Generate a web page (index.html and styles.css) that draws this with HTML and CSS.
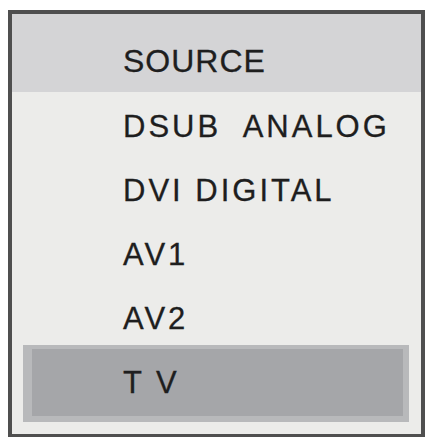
FILE: index.html
```html
<!DOCTYPE html>
<html>
<head>
<meta charset="utf-8">
<link rel="stylesheet" href="styles.css">
</head>
<body>
<div class="menu">
  <div class="menu-title">SOURCE</div>
  <ul class="menu-list">
    <li class="menu-item">DSUB  ANALOG</li>
    <li class="menu-item">DVI DIGITAL</li>
    <li class="menu-item">AV1</li>
    <li class="menu-item">AV2</li>
    <li class="menu-item selected">T V</li>
  </ul>
</div>
</body>
</html>
```
FILE: styles.css
```css
html, body {
  margin: 0;
  padding: 0;
  background: #ffffff;
}
body {
  padding: 10px 0 0 8px;
  font-family: "Liberation Sans", Arial, sans-serif;
  color: #1e1e1e;
}
.menu {
  width: 409px;
  height: 420px;
  border: 4px solid #4f4f4f;
  background: #ececea;
  display: flex;
  flex-direction: column;
}
.menu-title {
  height: 78px;
  box-sizing: border-box;
  padding: 31px 0 0 111px;
  background: #d4d4d6;
  font-size: 32px;
  line-height: 32px;
  letter-spacing: 1px;
  -webkit-text-stroke: 0.3px #1e1e1e;
}
.menu-list {
  list-style: none;
  margin: 0;
  padding: 3px 0 0 0;
  display: flex;
  flex-direction: column;
}
.menu-item {
  height: 64px;
  line-height: 64px;
  padding-left: 111px;
  font-size: 31px;
  letter-spacing: 3px;
  white-space: pre;
  -webkit-text-stroke: 0.3px #1e1e1e;
}
.menu-item.selected {
  margin: -6px 12px 0 11px;
  height: 67px;
  line-height: 67px;
  padding-left: 91px;
  background: #a5a6a9;
  border-style: solid;
  border-color: #b8b9bb;
  border-width: 4px 6px 6px 9px;
}
```
